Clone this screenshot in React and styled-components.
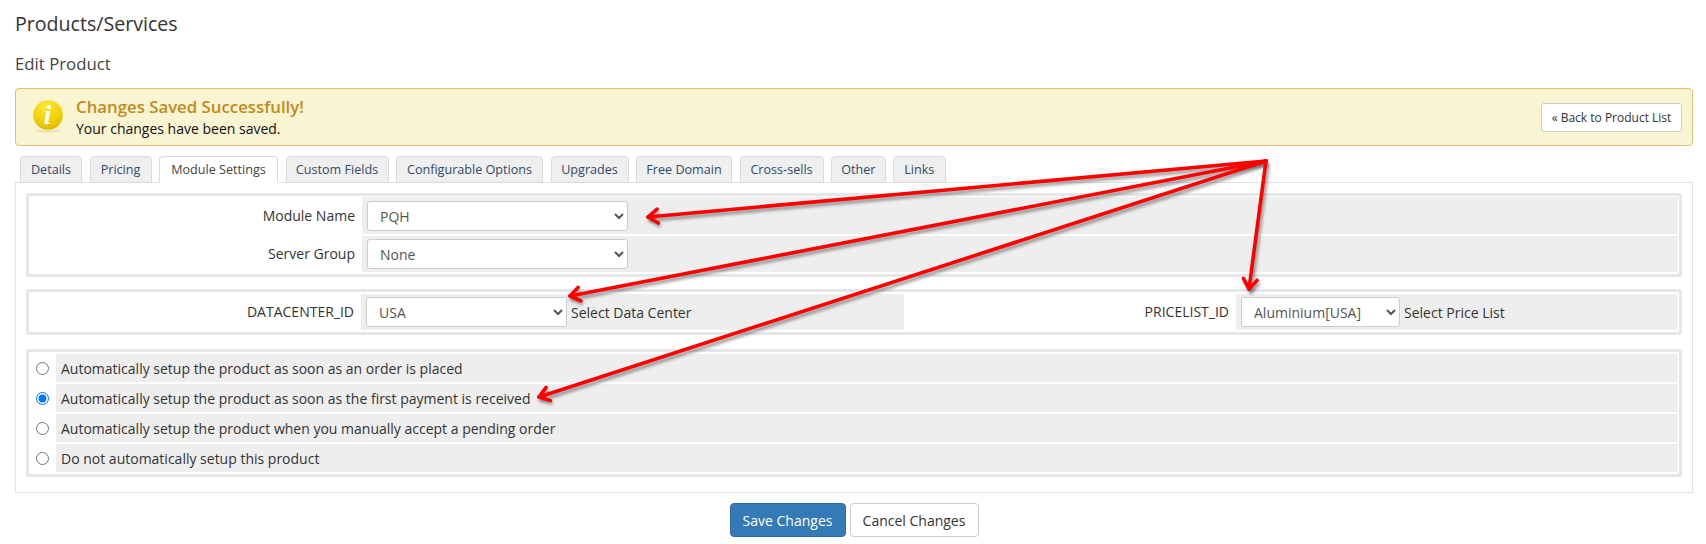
import React from 'react';
import styled, { createGlobalStyle } from 'styled-components';

const Global = createGlobalStyle`
  html, body {
    margin: 0;
    padding: 0;
    background: #fff;
  }
  body {
    font-family: "Open Sans", "Liberation Sans", sans-serif;
    font-size: 14px;
    color: #333;
  }
`;

const Page = styled.div`
  position: relative;
  width: 1706px;
  height: 544px;
  padding: 0 13px 0 15px;
  box-sizing: border-box;
  overflow: hidden;
`;
const Title = styled.h1`
  margin: 0;
  padding-top: 11px;
  font-size: 19.6px;
  line-height: 26px;
  font-weight: 400;
  color: #333;
`;
const SubTitle = styled.h2`
  margin: 0;
  padding-top: 16px;
  font-size: 16.8px;
  line-height: 22px;
  font-weight: 400;
  color: #444;
`;
const Alert = styled.div`
  margin-top: 13px;
  height: 58px;
  box-sizing: border-box;
  display: flex;
  align-items: center;
  padding: 0 10px 0 16px;
  background: #f9f4d1;
  border: 1px solid #e6bf6c;
  border-radius: 4px;
`;
const AlertIcon = styled.svg`
  width: 32px;
  height: 36px;
  flex: none;
`;
const AlertBody = styled.div`
  margin-left: 12px;
  flex: 1;
`;
const AlertTitle = styled.div`
  font-size: 16.8px;
  line-height: 22px;
  font-weight: 600;
  color: #c28a1c;
`;
const AlertText = styled.div`
  margin-top: 1px;
  font-size: 14px;
  line-height: 20px;
  color: #111;
`;
const BackButton = styled.button`
  width: 141px;
  height: 29px;
  padding: 0;
  font: 12px "Open Sans", sans-serif;
  color: #333;
  background: #fff;
  border: 1px solid #ccc;
  border-radius: 3px;
`;
const Tabs = styled.div`
  display: flex;
  gap: 7.5px;
  margin: 10px 0 -1px 5px;
  position: relative;
  z-index: 1;
`;
const Tab = styled.div`
  width: ${p => p.$w}px;
  height: 27px;
  box-sizing: border-box;
  display: flex;
  align-items: center;
  justify-content: center;
  font-size: 12.6px;
  color: ${p => (p.$active ? '#444' : '#2f4a6b')};
  background: ${p => (p.$active ? '#fff' : '#efefef')};
  border: 1px solid #d9dcde;
  border-bottom-color: ${p => (p.$active ? '#fff' : '#d9dcde')};
  border-radius: 4px 4px 0 0;
`;
const Panel = styled.div`
  height: 311px;
  box-sizing: border-box;
  padding: 10px 10px 0 10px;
  border: 1px solid #e0e3e5;
  display: flex;
  flex-direction: column;
`;
const Box = styled.div`
  margin-top: ${p => p.$gap || 0}px;
  padding: ${p => p.$top || 2}px 1px 2px;
  border: 3px solid #e2e7e9;
  border-radius: 3px;
  display: flex;
  flex-direction: column;
  gap: 2px;
  background: #fff;
`;
const Row = styled.div`
  display: flex;
  height: ${p => p.$h || 36}px;
`;
const Label = styled.div`
  flex: none;
  box-sizing: border-box;
  width: ${p => p.$w}px;
  display: flex;
  align-items: center;
  justify-content: flex-end;
  padding: 0 7px 1px 0;
  color: #333;
`;
const Field = styled.div`
  display: flex;
  align-items: center;
  box-sizing: border-box;
  flex: ${p => (p.$w ? 'none' : 1)};
  width: ${p => (p.$w ? `${p.$w}px` : 'auto')};
  padding-left: 5px;
  background: #eee;
  color: #333;
`;
const Select = styled.select`
  flex: none;
  box-sizing: border-box;
  width: ${p => p.$w}px;
  height: 30px;
  margin-right: 4px;
  padding: 1px 0 0 8px;
  font: 14px "Open Sans", sans-serif;
  color: #555;
  background: #fff;
  border: 1px solid #ccc;
  border-radius: 3px;
`;
const RadioRow = styled.div`
  display: flex;
  height: 28px;
`;
const RadioCell = styled.div`
  flex: none;
  width: 26px;
  display: flex;
  align-items: center;
  justify-content: center;
  padding-right: 2px;
  box-sizing: border-box;
`;
const Radio = styled.input`
  margin: 0;
  width: 13px;
  height: 13px;
`;
const RadioLabel = styled.div`
  flex: 1;
  display: flex;
  align-items: center;
  padding-left: 5px;
  background: #eee;
  color: #333;
`;
const Actions = styled.div`
  display: flex;
  justify-content: center;
  gap: 4px;
  margin-top: 10px;
`;
const Button = styled.button`
  height: 34px;
  width: ${p => p.$w}px;
  padding: 0;
  font: 14px "Open Sans", sans-serif;
  color: ${p => (p.$primary ? '#fff' : '#333')};
  background: ${p => (p.$primary ? '#337ab7' : '#fff')};
  border: 1px solid ${p => (p.$primary ? '#2e6da4' : '#ccc')};
  border-radius: 4px;
`;
const Arrows = styled.svg`
  position: absolute;
  left: 0;
  top: 0;
  width: 1706px;
  height: 544px;
  pointer-events: none;
  z-index: 2;
`;

const tabs = [
  ['Details', 62],
  ['Pricing', 62],
  ['Module Settings', 119, true],
  ['Custom Fields', 103],
  ['Configurable Options', 147],
  ['Upgrades', 78],
  ['Free Domain', 96],
  ['Cross-sells', 84],
  ['Other', 54.5],
  ['Links', 52.5],
];

const setupOptions = [
  'Automatically setup the product as soon as an order is placed',
  'Automatically setup the product as soon as the first payment is received',
  'Automatically setup the product when you manually accept a pending order',
  'Do not automatically setup this product',
];

const arrowTips = [
  [648, 217],
  [570, 296],
  [539, 397],
  [1249, 289],
];

const Arrow = ({ tip }) => {
  const [x, y] = tip;
  const ox = 1266;
  const oy = 161;
  const a = Math.atan2(oy - y, ox - x);
  const size = 12;
  const spread = 0.62;
  const p1 = [x + size * Math.cos(a + spread), y + size * Math.sin(a + spread)];
  const p2 = [x + size * Math.cos(a - spread), y + size * Math.sin(a - spread)];
  return (
    <>
      <path d={`M${ox} ${oy}L${x} ${y}`} />
      <path d={`M${p1[0]} ${p1[1]}L${x} ${y}L${p2[0]} ${p2[1]}`} />
    </>
  );
};

const arrowLines = arrowTips.map(t => <Arrow key={t[0]} tip={t} />);

const Picker = ({ w, value }) => (
  <Select $w={w} defaultValue={value}>
    <option>{value}</option>
  </Select>
);

function App() {
  return (
    <Page>
      <Global />
      <Title>Products/Services</Title>
      <SubTitle>Edit Product</SubTitle>
      <Alert>
        <AlertIcon viewBox="0 0 32 36">
          <defs>
            <radialGradient id="coin" cx="0.42" cy="0.2" r="0.9">
              <stop offset="0" stopColor="#fbe93a" />
              <stop offset="0.6" stopColor="#f0d006" />
              <stop offset="1" stopColor="#dcb000" />
            </radialGradient>
          </defs>
          <ellipse cx="16" cy="32" rx="12" ry="1.6" fill="#ece3b8" />
          <circle cx="16" cy="16" r="14.8" fill="url(#coin)" />
          <text x="15.5" y="24.5" textAnchor="middle" fontFamily="Liberation Serif, serif" fontStyle="italic" fontWeight="700" fontSize="27" fill="#fff">i</text>
        </AlertIcon>
        <AlertBody>
          <AlertTitle>Changes Saved Successfully!</AlertTitle>
          <AlertText>Your changes have been saved.</AlertText>
        </AlertBody>
        <BackButton>« Back to Product List</BackButton>
      </Alert>
      <Tabs>
        {tabs.map(([name, w, active]) => (
          <Tab key={name} $w={w} $active={active}>{name}</Tab>
        ))}
      </Tabs>
      <Panel>
        <Box $top={1}>
          <Row $h={37}>
            <Label $w={332}>Module Name</Label>
            <Field>
              <Picker w={261} value="PQH" />
            </Field>
          </Row>
          <Row>
            <Label $w={332}>Server Group</Label>
            <Field>
              <Picker w={261} value="None" />
            </Field>
          </Row>
        </Box>
        <Box $gap={12}>
          <Row>
            <Label $w={331}>DATACENTER_ID</Label>
            <Field $w={543}>
              <Picker w={201} value="USA" />
              Select Data Center
            </Field>
            <Label $w={332}>PRICELIST_ID</Label>
            <Field>
              <Picker w={159} value="Aluminium[USA]" />
              Select Price List
            </Field>
          </Row>
        </Box>
        <Box $gap={14}>
          {setupOptions.map((text, i) => (
            <RadioRow key={text}>
              <RadioCell>
                <Radio type="radio" name="autosetup" defaultChecked={i === 1} />
              </RadioCell>
              <RadioLabel>{text}</RadioLabel>
            </RadioRow>
          ))}
        </Box>
      </Panel>
      <Actions>
        <Button $primary $w={116}>Save Changes</Button>
        <Button $w={129}>Cancel Changes</Button>
      </Actions>
      <Arrows viewBox="0 0 1706 544">
        <defs>
          <filter id="soft" x="-5%" y="-5%" width="110%" height="110%">
            <feGaussianBlur stdDeviation="1.4" />
          </filter>
        </defs>
        <g transform="translate(2 3)" fill="none" stroke="#555" strokeOpacity="0.55" strokeWidth="4" filter="url(#soft)">
          {arrowLines}
        </g>
        <g fill="none" stroke="#f00" strokeWidth="3.6" strokeLinecap="round" strokeLinejoin="round">
          {arrowLines}
        </g>
      </Arrows>
    </Page>
  );
}

export default App;
